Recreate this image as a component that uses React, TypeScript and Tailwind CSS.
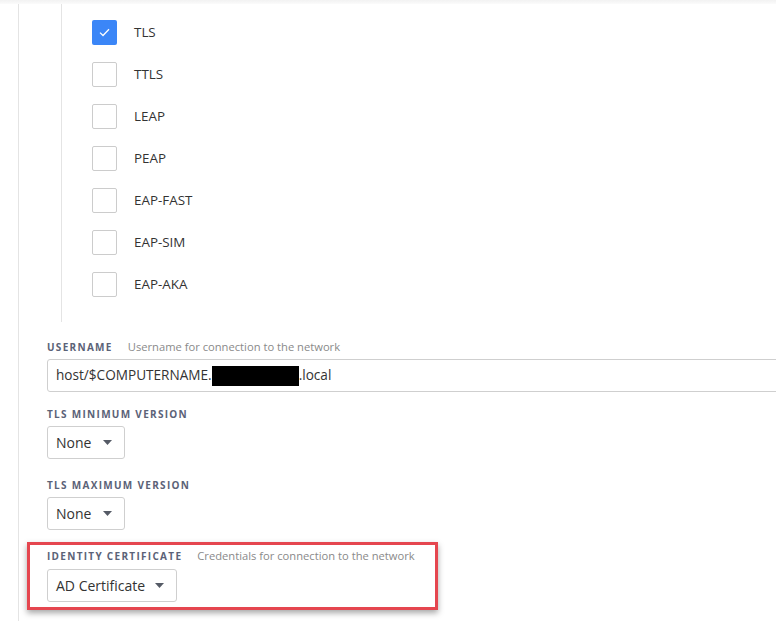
import React from "react";

const items = ["TLS", "TTLS", "LEAP", "PEAP", "EAP-FAST", "EAP-SIM", "EAP-AKA"];

function Caret() {
  return (
    <svg width="9" height="5" viewBox="0 0 9 5" className="block">
      <path d="M0 0 L9 0 L4.5 5 Z" fill="#555b66" />
    </svg>
  );
}

function Select({ value, w }: { value: string; w: string }) {
  return (
    <div className={`flex h-[33px] items-center justify-between rounded-[3px] border border-[#cfcfcf] bg-white pl-[8px] pr-[12px] ${w}`}>
      <span className="text-[14px] text-[#333]">{value}</span>
      <Caret />
    </div>
  );
}

function Label({ title, desc }: { title: string; desc?: string }) {
  return (
    <div className="flex h-[14px] items-center">
      <span className="text-[10px] font-bold uppercase tracking-[1.3px] text-[#5b6277]">{title}</span>
      {desc && <span className="ml-[15px] text-[11.2px] text-[#8a8a8a]">{desc}</span>}
    </div>
  );
}

export default function App() {
  return (
    <div className="relative h-[621px] w-[776px] overflow-hidden bg-white" style={{ fontFamily: '"Open Sans", "Liberation Sans", sans-serif' }}>
      <div className="absolute left-0 right-0 top-0 h-[4px] bg-gradient-to-b from-[#f2f2f2] to-[#fbfbfb]" />
      <div className="ml-[18px] h-full border-l border-[#e4e4e4]">
        <div className="ml-[42px] border-l border-[#e4e4e4] pb-[17px] pt-[11px]">
          {items.map((it, i) => (
            <div key={it} className="flex h-[42px] items-center pl-[30px]">
              {i === 0 ? (
                <div className="flex h-[25px] w-[25px] items-center justify-center rounded-[2px] bg-[#3b86f7]">
                  <svg width="11" height="9" viewBox="0 0 11 9">
                    <path d="M1 4.6 L4 7.5 L10 1.2" fill="none" stroke="white" strokeWidth="1.3" />
                  </svg>
                </div>
              ) : (
                <div className="h-[25px] w-[25px] rounded-[2px] border border-[#cccccc] bg-white" />
              )}
              <span className="ml-[17px] text-[13.4px] text-[#333]">{it}</span>
            </div>
          ))}
        </div>
        <div className="pl-[28px]">
          <div className="mt-[18px]">
            <Label title="Username" desc="Username for connection to the network" />
          </div>
          <div className="mt-[5px] flex h-[33px] w-[760px] items-center rounded-l-[3px] border border-[#cfcfcf] pl-[8px] text-[13.6px] text-[#333]">
            <span>host/$COMPUTERNAME.</span>
            <span className="inline-block h-[20px] w-[87px] bg-black" />
            <span>.local</span>
          </div>
          <div className="mt-[15px]">
            <Label title="TLS Minimum Version" />
          </div>
          <div className="mt-[5px]">
            <Select value="None" w="w-[78px]" />
          </div>
          <div className="mt-[19px]">
            <Label title="TLS Maximum Version" />
          </div>
          <div className="mt-[5px]">
            <Select value="None" w="w-[78px]" />
          </div>
          <div className="-ml-[20px] mt-[12px] w-[411px] border-[3px] border-[#e5464f] pb-[5px] pl-[17px] pt-[4px] shadow-[0_3px_6px_rgba(0,0,0,0.35)]">
            <Label title="Identity Certificate" desc="Credentials for connection to the network" />
            <div className="mt-[6px]">
              <Select value="AD Certificate" w="w-[130px]" />
            </div>
          </div>
        </div>
      </div>
    </div>
  );
}
